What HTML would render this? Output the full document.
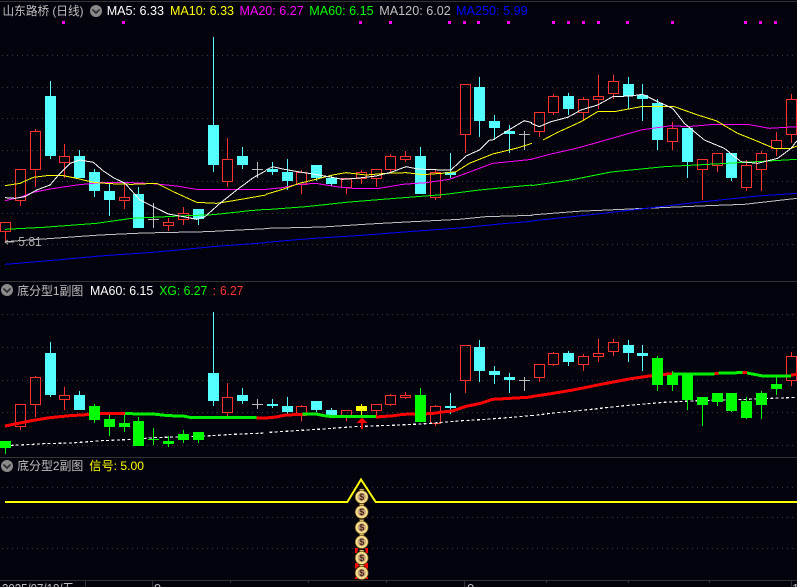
<!DOCTYPE html>
<html><head><meta charset="utf-8"><style>
html,body{margin:0;padding:0;background:#03030d;width:797px;height:587px;overflow:hidden}
svg{display:block}
text{font-family:"Liberation Sans","Noto Sans CJK SC",sans-serif;font-size:13px}
.l{fill:none;stroke-width:3;shape-rendering:crispEdges;stroke-linejoin:round}
.w{stroke:#fff}.y{stroke:#ff0}.m{stroke:#f0f}.g{stroke:#0f0}.s{stroke:#c0c0c0}.b{stroke:#00f}
.t{fill:none;stroke-width:9;shape-rendering:crispEdges}.r{stroke:#f00}.gg{stroke:#0e0}
.d{fill:none;stroke:#fff;stroke-width:3.5;stroke-dasharray:9 7;shape-rendering:crispEdges}
</style></head><body>
<svg xmlns="http://www.w3.org/2000/svg" width="797" height="587" viewBox="0 0 797 587">
<!-- frames -->
<g fill="#333" shape-rendering="crispEdges">
<rect x="0" y="1" width="797" height="1"/><rect x="0" y="281" width="797" height="1"/><rect x="0" y="457" width="797" height="1"/><rect x="0" y="580" width="797" height="1"/>
<rect x="85" y="580" width="1" height="7"/><rect x="152" y="580" width="1" height="7"/><rect x="464" y="580" width="1" height="7"/><rect x="791" y="580" width="1" height="7"/>
<rect x="230" y="581" width="1" height="2"/><rect x="308" y="581" width="1" height="2"/><rect x="386" y="581" width="1" height="2"/><rect x="546" y="581" width="1" height="2"/><rect x="628" y="581" width="1" height="2"/><rect x="709" y="581" width="1" height="2"/>
</g>
<!-- grid -->
<path d="M2 55.5H797M2 87.5H797M2 118.5H797M2 150.5H797M2 181.5H797M2 213.5H797M2 244.5H797M2 314.5H797M2 347.5H797M2 380.5H797M2 412.5H797M2 445.5H797M2 487.5H797M2 517.5H797M2 548.5H797" stroke="#3a3a3a" stroke-dasharray="1 4" fill="none" shape-rendering="crispEdges"/>
<!-- magenta markers -->
<path fill="#f0f" shape-rendering="crispEdges" d="M62 21h3v3h-3zM122 21h3v3h-3zM359 21h3v3h-3zM389 21h3v3h-3zM448 21h3v3h-3zM463 21h3v3h-3zM477 21h3v3h-3zM507 21h3v3h-3zM552 21h3v3h-3zM567 21h3v3h-3zM582 21h3v3h-3zM597 21h3v3h-3zM626 21h3v3h-3zM671 21h3v3h-3zM744 21h3v3h-3zM759 21h3v3h-3zM774 21h3v3h-3z"/>

<!-- MAIN candles -->
<path fill="none" stroke="#ff3232" shape-rendering="crispEdges" d="
M.5 222.5h10v9h-10zM5.5 232V243
M15.5 169.5h10v31h-10zM20.5 201V206
M30.5 131.5h10v38h-10zM35.5 129V131M35.5 170V187
M59.5 156.5h10v6h-10zM64.5 144V156M64.5 163V178
M119.5 197.5h10v3h-10zM124.5 184V197M124.5 201V209
M163.5 222.5h10v3h-10zM168.5 218V222M168.5 226V231
M178.5 213.5h10v6h-10zM183.5 207V213M183.5 220V225
M222.5 159.5h10v22h-10zM227.5 138V159M227.5 182V187
M296.5 172.5h10v12h-10zM301.5 170V172M301.5 185V194
M341.5 178.5h10v9h-10zM346.5 188V194
M356.5 172.5h10v6h-10zM361.5 170V172M361.5 179V184
M371.5 169.5h10v9h-10zM376.5 179V187
M385.5 156.5h10v13h-10zM390.5 154V156M390.5 170V172
M400.5 156.5h10v3h-10zM405.5 151V156M405.5 160V162
M430.5 172.5h10v25h-10zM435.5 170V172M435.5 198V200
M460.5 84.5h10v50h-10zM465.5 135V153
M534.5 112.5h10v19h-10zM539.5 132V137
M548.5 96.5h10v16h-10zM553.5 94V96M553.5 113V115
M578.5 99.5h10v13h-10zM583.5 97V99M583.5 113V121
M593.5 96.5h10v3h-10zM598.5 75V96M598.5 100V109
M608.5 81.5h10v12h-10zM613.5 75V81M613.5 94V99
M667.5 128.5h10v13h-10zM672.5 122V128M672.5 142V150
M697.5 159.5h10v10h-10zM702.5 170V200
M712.5 153.5h10v12h-10zM717.5 166V172
M741.5 165.5h10v22h-10zM746.5 160V165M746.5 188V191
M756.5 153.5h10v16h-10zM761.5 151V153M761.5 170V191
M771.5 140.5h10v8h-10zM776.5 132V140M776.5 149V156
M786.5 99.5h10v35h-10zM791.5 94V99M791.5 135V143"/>
<path fill="none" stroke="#bbb" shape-rendering="crispEdges" d="M153.5 203V228M148 219.5h11M257.5 162V178M252 169.5h11M524.5 131V150M519 134.5h11"/>
<path fill="none" stroke="#54ffff" shape-rendering="crispEdges" d="M50.5 81V159M79.5 150V178M94.5 169V197M109.5 183V216M138.5 187V228M198.5 209V225M213.5 37V172M242.5 147V169M272.5 162V175M287.5 159V190M316.5 165V181M331.5 175V186M420.5 147V194M450.5 153V178M479.5 77V137M494.5 115V140M509.5 125V153M568.5 93V115M628.5 77V109M642.5 84V121M657.5 99V150M687.5 128V178M731.5 153V181"/>
<path fill="#54ffff" shape-rendering="crispEdges" d="M45 96h11v60h-11zM74 156h11v22h-11zM89 172h11v19h-11zM104 191h11v9h-11zM133 194h11v34h-11zM193 209h11v10h-11zM208 125h11v40h-11zM237 156h11v9h-11zM267 169h11v3h-11zM282 172h11v9h-11zM311 165h11v13h-11zM326 178h11v6h-11zM415 156h11v38h-11zM445 172h11v3h-11zM474 87h11v34h-11zM489 121h11v7h-11zM504 131h11v3h-11zM563 96h11v13h-11zM623 84h11v12h-11zM637 95h11v4h-11zM652 103h11v37h-11zM682 128h11v34h-11zM726 153h11v25h-11z"/>

<!-- MAIN MA lines, zoom-space coordinates -->
<g transform="translate(0,140) scale(.33333)">
<polyline class="l b" points="15,373 170,360 300,348 470,336 650,319 798,308"/>
<polyline class="l s" points="15,305 130,297 300,285 430,279 620,275 798,266"/>
<polyline class="l g" points="15,268 130,262 290,250 395,235 540,228 640,224 750,212 798,208"/>
<polyline class="l m" points="15,182 60,172 100,157 150,147 190,141 230,135 300,128 395,128 460,131 530,138 590,148 798,148"/>
<polyline class="l y" points="15,137 60,130 100,112 140,107 190,107 230,115 280,127 330,131 395,133 470,130 520,155 590,187 650,190 700,182 798,165"/>
<polyline class="l w" points="15,173 45,175 75,170 110,150 150,135 180,100 210,70 240,60 280,67 310,93 340,113 375,130 420,180 460,200 505,222 550,230 590,238 615,230 660,190 710,150 760,113 798,92"/>
</g>
<g transform="translate(266,140) scale(.33333)">
<polyline class="l b" points="0,307 130,296 300,285 440,274 580,264 700,252 798,244"/>
<polyline class="l s" points="0,265 170,261 310,252 440,245 580,238 660,230 798,226"/>
<polyline class="l g" points="0,209 120,200 250,186 400,174 530,164 640,150 798,135"/>
<polyline class="l m" points="0,148 50,143 90,134 150,130 210,140 260,145 340,145 410,133 480,128 550,118 600,100 680,70 750,63 798,58"/>
<polyline class="l y" points="0,163 50,148 100,130 150,118 200,105 240,98 300,105 360,100 420,98 470,104 540,99 570,95 610,70 680,42 750,25 798,10"/>
<polyline class="l w" points="0,90 20,80 50,87 95,95 140,102 175,108 230,118 270,115 330,108 375,97 420,80 455,87 530,90 555,90 600,48 640,30 670,0"/>
</g>
<g transform="translate(266,0) scale(.33333)">
<polyline class="l w" points="670,420 680,420 720,395 775,362 798,368"/>
</g>
<g transform="translate(531,0) scale(.33333)">
<polyline class="l m" points="225,420 330,390 420,377 470,380 550,373 650,373 715,385 798,380"/>
<polyline class="l y" points="36,420 80,397 150,365 200,335 255,334 330,320 430,320 500,345 555,362 620,400 670,420"/>
<polyline class="l w" points="0,370 25,380 60,365 110,352 150,330 200,315 245,290 300,288 335,283 380,305 425,325 460,370 520,420"/>
</g>
<g transform="translate(531,140) scale(.33333)">
<polyline class="l s" points="0,225 140,214 320,206 530,197 640,193 798,175"/>
<polyline class="l b" points="0,243 180,224 320,208 500,187 680,168 798,160"/>
<polyline class="l g" points="0,137 120,120 240,96 400,80 590,70 798,58"/>
<polyline class="l m" points="0,58 60,42 140,24 225,0"/>
<polyline class="l y" points="670,0 730,25 780,25 798,18"/>
<polyline class="l w" points="520,0 580,25 630,65 680,70 740,55 780,25 798,2"/>
</g>

<!-- Pane 2 hollow and cyan candles -->
<path fill="none" stroke="#ff3232" shape-rendering="crispEdges" d="
M15.5 404.5h10v22h-10zM20.5 427V430
M30.5 377.5h10v27h-10zM35.5 376V377M35.5 405V417
M59.5 395.5h10v4h-10zM64.5 387V395M64.5 400V410
M222.5 397.5h10v15h-10zM227.5 383V397M227.5 413V417
M296.5 406.5h10v9h-10zM301.5 405V406M301.5 416V421
M341.5 410.5h10v6h-10zM346.5 417V421
M371.5 404.5h10v6h-10zM376.5 411V417
M385.5 395.5h10v9h-10zM390.5 394V395M390.5 405V406
M400.5 395.5h10v2h-10zM405.5 392V395M405.5 398V399
M430.5 406.5h10v17h-10zM435.5 405V406M435.5 424V426
M460.5 345.5h10v35h-10zM465.5 381V393
M534.5 364.5h10v13h-10zM539.5 378V382
M548.5 353.5h10v11h-10zM553.5 352V353M553.5 365V366
M578.5 356.5h10v8h-10zM583.5 354V356M583.5 365V371
M593.5 353.5h10v3h-10zM598.5 339V353M598.5 357V362
M608.5 342.5h10v9h-10zM613.5 339V342M613.5 352V356
M786.5 356.5h10v24h-10zM791.5 352V356M791.5 381V386"/>
<path fill="none" stroke="#bbb" shape-rendering="crispEdges" d="M257.5 399V409M252 404.5h11M524.5 377V391M519 380.5h11"/>
<path fill="none" stroke="#54ffff" shape-rendering="crispEdges" d="M50.5 342V397M79.5 391V410M213.5 312V406M242.5 388V404M272.5 399V408M287.5 397V414M316.5 401V412M331.5 408V416M450.5 393V414M479.5 340V382M494.5 366V384M509.5 373V393M568.5 351V366M628.5 340V362M642.5 345V371"/>
<path fill="#54ffff" shape-rendering="crispEdges" d="M45 353h11v42h-11zM74 395h11v15h-11zM208 373h11v28h-11zM237 395h11v6h-11zM267 404h11v2h-11zM282 406h11v6h-11zM311 401h11v9h-11zM326 410h11v5h-11zM445 406h11v2h-11zM474 347h11v24h-11zM489 371h11v4h-11zM504 377h11v3h-11zM563 353h11v9h-11zM623 345h11v8h-11zM637 353h11v3h-11z"/>

<!-- Pane 2 lines -->
<g transform="translate(0,280) scale(.33333)">
<polyline class="d" points="15,497 100,493 130,491 215,489 305,482 400,478 460,473 600,469 700,463 798,459"/>
<polyline class="t r" points="15,438 50,431 100,421 150,413 210,407 260,404 300,401 375,400"/>
<polyline class="t gg" points="375,401 460,402 505,407 550,408 570,412 770,412"/>
<polyline class="t r" points="770,414 798,414"/>
</g>
<g transform="translate(266,280) scale(.33333)">
<polyline class="d" points="10,457 170,447 265,440 400,435 480,431 590,422 660,418 750,411 798,406"/>
<polyline class="t r" points="0,414 30,411 60,405 110,403"/>
<polyline class="t gg" points="110,402 150,402 175,407 200,410 330,410"/>
<polyline class="t r" points="330,411 385,407 410,403 495,401 530,396 560,393 600,379 640,371 680,358 750,354 798,351"/>
</g>
<g transform="translate(531,280) scale(.33333)">
<polyline class="d" points="0,407 60,400 190,387 280,377 400,367 500,362 620,359 720,355 798,352"/>
<polyline class="t r" points="0,350 60,341 120,331 210,313 300,296 355,288 400,283 425,282"/>
<polyline class="t gg" points="425,282 550,282"/>
<polyline class="t r" points="550,281 562,281"/>
<polyline class="t gg" points="562,279 635,278"/>
<polyline class="t r" points="635,277 648,277"/>
<polyline class="t gg" points="648,279 675,284 695,288 780,288"/>
<polyline class="t r" points="780,286 798,282"/>
</g>

<!-- Pane 2 green and yellow candles above the lines -->
<path fill="none" stroke="#0f0" shape-rendering="crispEdges" d="M5.5 441V454M94.5 404V423M109.5 415V436M124.5 415V432M138.5 417V446M153.5 428V445M148 439.5h11M168.5 436V447M183.5 430V443M198.5 432V443M420.5 388V422M657.5 356V391M672.5 371V391M687.5 374V410M702.5 397V426M717.5 393V406M731.5 393V412M746.5 397V419M761.5 391V419M776.5 377V395"/>
<path fill="#0f0" shape-rendering="crispEdges" d="M0 441h11v7h-11zM89 406h11v14h-11zM104 419h11v8h-11zM119 423h11v4h-11zM133 421h11v25h-11zM163 441h11v3h-11zM178 434h11v6h-11zM193 432h11v8h-11zM415 395h11v27h-11zM652 358h11v27h-11zM667 375h11v10h-11zM682 374h11v26h-11zM697 397h11v8h-11zM712 393h11v9h-11zM726 393h11v18h-11zM741 401h11v17h-11zM756 393h11v12h-11zM771 384h11v5h-11z"/>
<path fill="none" stroke="#ff0" shape-rendering="crispEdges" d="M361.5 404V415"/>
<path fill="#ff0" shape-rendering="crispEdges" d="M356 406h11v5h-11z"/>

<!-- red arrow -->
<path fill="#f00" d="M362 417.500l5.500 5.500h-4.500v6h-2v-6h-4.500z"/>

<!-- Pane 3 -->
<polyline fill="none" stroke="#ff0" stroke-width="2" points="5,502 347.300,502 361,479.500 375.700,502 797,502"/>
<path fill="#f00" d="M355 548h3l-1 5h-2zM365 548h3v5h-2zM355 563h3l1 3-4 3zM365 563h3v6l-4-3zM355 577h3v2h-3zM365 577h3v2h-3z"/>
<defs><g id="bag"><path d="M-2.500-8h5l-1 2.500h-3z" fill="#f7e08a" stroke="#5a3c10" stroke-width=".5"/><circle cx="0" cy="0" r="6.500" fill="#f7e08a" stroke="#6a4a18" stroke-width=".7"/><circle cx="0" cy="0" r="4.200" fill="#c9a67e"/></g></defs>
<use href="#bag" x="361.700" y="497"/><use href="#bag" x="361.700" y="512"/><use href="#bag" x="361.700" y="527.500"/><use href="#bag" x="361.700" y="542"/><use href="#bag" x="361.700" y="558"/><use href="#bag" x="361.700" y="573"/>
<g fill="#4a2418" text-anchor="middle">
<text x="361.700" y="500" style="font-size:9px;font-weight:bold">$</text><text x="361.700" y="515" style="font-size:9px;font-weight:bold">$</text><text x="361.700" y="530.500" style="font-size:9px;font-weight:bold">$</text><text x="361.700" y="545" style="font-size:9px;font-weight:bold">$</text><text x="361.700" y="561" style="font-size:9px;font-weight:bold">$</text><text x="361.700" y="576" style="font-size:9px;font-weight:bold">$</text>
</g>

<!-- Arrow label -->
<path d="M5 242h9M5 242l3-2M5 242l3 2" stroke="#aaa" fill="none"/>
<text x="18.300" y="246" fill="#aaa" textLength="23.400" lengthAdjust="spacingAndGlyphs">5.81</text>

<!-- Header texts -->
<g><circle cx="96" cy="11" r="6" fill="#8a8a8a"/><path d="M92.500 9.500l3.500 3.500 3.500-3.500" fill="none" stroke="#2a2a2a" stroke-width="1.600"/></g>
<g><circle cx="7" cy="290" r="6" fill="#8a8a8a"/><path d="M3.500 288.500l3.500 3.500 3.500-3.500" fill="none" stroke="#2a2a2a" stroke-width="1.600"/></g>
<g><circle cx="7" cy="466" r="6" fill="#8a8a8a"/><path d="M3.500 464.500l3.500 3.500 3.500-3.500" fill="none" stroke="#2a2a2a" stroke-width="1.600"/></g>

<text x="2.500" y="15" fill="#c0c0c0" textLength="81" lengthAdjust="spacingAndGlyphs" style="font-size:12px">山东路桥 (日线)</text>
<text x="106.700" y="15" fill="#fff" textLength="57.300" lengthAdjust="spacingAndGlyphs">MA5: 6.33</text>
<text x="170" y="15" fill="#ff0" textLength="64" lengthAdjust="spacingAndGlyphs">MA10: 6.33</text>
<text x="239.500" y="15" fill="#f0f" textLength="64.200" lengthAdjust="spacingAndGlyphs">MA20: 6.27</text>
<text x="309.300" y="15" fill="#0f0" textLength="64.400" lengthAdjust="spacingAndGlyphs">MA60: 6.15</text>
<text x="379.300" y="15" fill="#c0c0c0" textLength="71.400" lengthAdjust="spacingAndGlyphs">MA120: 6.02</text>
<text x="456" y="15" fill="#00f" textLength="71.700" lengthAdjust="spacingAndGlyphs">MA250: 5.99</text>

<text x="17.300" y="295" fill="#c0c0c0" textLength="66" lengthAdjust="spacingAndGlyphs" style="font-size:12px">底分型1副图</text>
<text x="90" y="295" fill="#fff" textLength="63.300" lengthAdjust="spacingAndGlyphs">MA60: 6.15</text>
<text x="159.300" y="295" fill="#0f0" textLength="48" lengthAdjust="spacingAndGlyphs">XG: 6.27</text>
<text x="212.500" y="295" fill="#f33">:</text>
<text x="220" y="295" fill="#f33" textLength="23.300" lengthAdjust="spacingAndGlyphs">6.27</text>

<text x="17.300" y="470" fill="#c0c0c0" textLength="66" lengthAdjust="spacingAndGlyphs" style="font-size:12px">底分型2副图</text>
<text x="89.300" y="470" fill="#ff0" textLength="54.700" lengthAdjust="spacingAndGlyphs" style="font-size:12px">信号: 5.00</text>

<!-- axis labels -->
<text x="2" y="593" fill="#c0c0c0" textLength="72" lengthAdjust="spacingAndGlyphs">2025/07/18/五</text>
<text x="154" y="593" fill="#c0c0c0">9</text>
<text x="467" y="593" fill="#c0c0c0">0</text>
<text x="792" y="593" fill="#c0c0c0">1</text>
</svg>
</body></html>
